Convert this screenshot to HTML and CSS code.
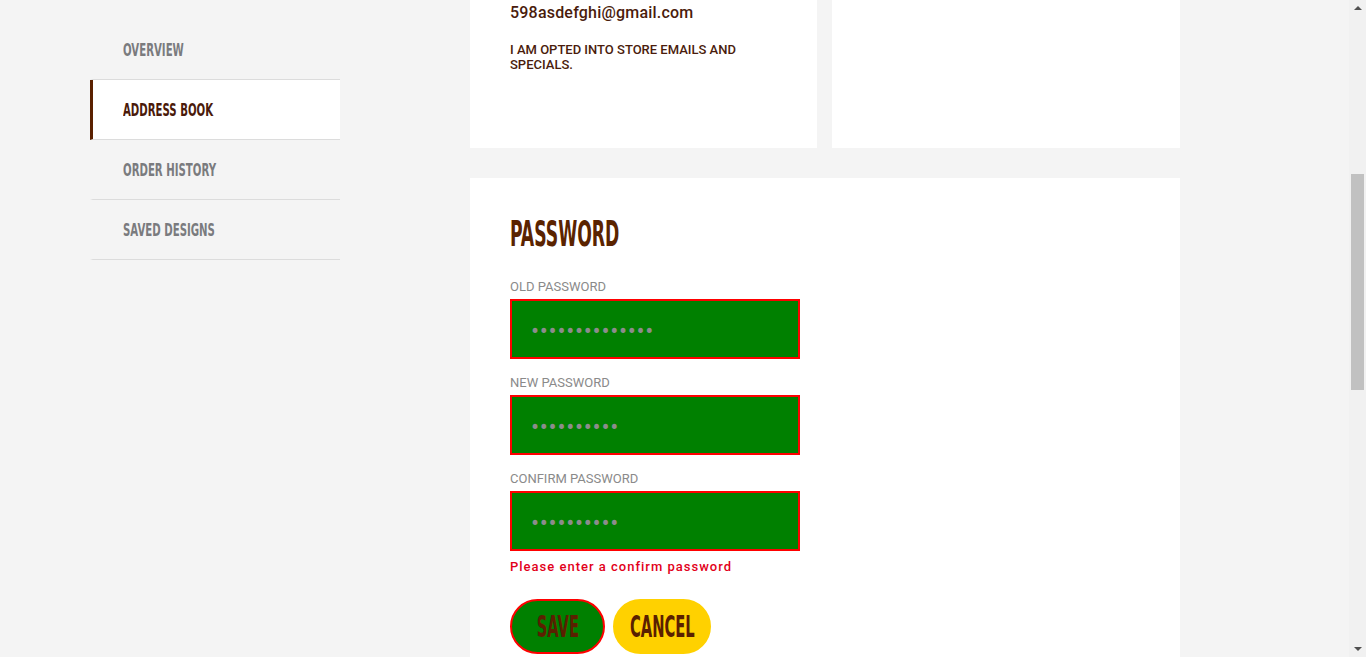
FILE: index.html
```html
<!DOCTYPE html>
<html lang="en">
<head>
<meta charset="utf-8">
<title>My Account - Password</title>
<link rel="stylesheet" href="styles.css">
</head>
<body>
<div class="account">
  <aside class="sidebar">
    <nav class="side-nav">
      <a class="side-link" href="#"><span class="cond">OVERVIEW</span></a>
      <a class="side-link is-active" href="#"><span class="cond">ADDRESS BOOK</span></a>
      <a class="side-link" href="#"><span class="cond">ORDER HISTORY</span></a>
      <a class="side-link" href="#"><span class="cond">SAVED DESIGNS</span></a>
    </nav>
  </aside>
  <main class="main">
    <div class="card-row">
      <section class="card info-card">
        <p class="email">598asdefghi@gmail.com</p>
        <p class="optin">I AM OPTED INTO STORE EMAILS AND SPECIALS.</p>
      </section>
      <section class="card address-card"></section>
    </div>
    <section class="card password-card">
      <h2 class="section-title"><span class="cond">PASSWORD</span></h2>
      <form class="pw-form">
        <label class="field-label" for="old-pw">OLD PASSWORD</label>
        <input class="field-input" type="password" id="old-pw" value="aaaaaaaaaaaaaa">
        <label class="field-label" for="new-pw">NEW PASSWORD</label>
        <input class="field-input" type="password" id="new-pw" value="aaaaaaaaaa">
        <label class="field-label" for="confirm-pw">CONFIRM PASSWORD</label>
        <input class="field-input" type="password" id="confirm-pw" value="aaaaaaaaaa">
        <p class="error">Please enter a confirm password</p>
        <div class="actions">
          <button type="button" class="btn btn-save"><span class="cond">SAVE</span></button>
          <button type="button" class="btn btn-cancel"><span class="cond">CANCEL</span></button>
        </div>
      </form>
    </section>
  </main>
</div>
<div class="fake-scrollbar" aria-hidden="true">
  <span class="sb-arrow sb-up"></span>
  <span class="sb-thumb"></span>
  <span class="sb-arrow sb-down"></span>
</div>
<script src="script.js"></script>
</body>
</html>
```
FILE: styles.css
```css
html {
  overflow-y: scroll;
}
body {
  margin: 0;
  background: #f4f4f4;
  font-family: Roboto, "Liberation Sans", sans-serif;
  color: #4a1c0c;
}
.account {
  display: flex;
  gap: 130px;
  padding: 396px 0 724px 90px;
}
.sidebar {
  width: 250px;
  flex: none;
  padding-top: 101px;
}
.side-nav {
  display: flex;
  flex-direction: column;
}
.cond {
  display: inline-block;
  font-family: "Liberation Sans Narrow", "DejaVu Sans Condensed", "Liberation Sans", sans-serif;
  font-weight: 700;
  white-space: nowrap;
  transform-origin: left center;
}
.side-link {
  height: 59px;
  display: flex;
  align-items: center;
  padding-left: 30px;
  border-bottom: 1px solid #dcdcdc;
  border-left: 3px solid transparent;
  text-decoration: none;
  color: #7a7b7e;
  font-size: 17px;
}
.side-link .cond {
  transform: scaleX(0.665);
}
.side-link.is-active {
  background: #fff;
  border-left-color: #5a2000;
  color: #4a1a0a;
}
.main {
  width: 710px;
  flex: none;
  display: flex;
  flex-direction: column;
  gap: 30px;
}
.card-row {
  display: flex;
  gap: 15px;
}
.card {
  background: #fff;
  box-sizing: border-box;
}
.info-card {
  width: 347px;
  padding: 82px 40px 76px;
}
.address-card {
  width: 348px;
}
.email {
  margin: 0;
  font-size: 16px;
  line-height: 24px;
  letter-spacing: 0.2px;
  font-weight: 500;
}
.optin {
  margin: 17px 0 0;
  font-size: 13px;
  line-height: 15px;
  font-weight: 500;
}
.password-card {
  padding: 38px 40px 40px;
}
.section-title {
  margin: 0 0 27px;
  font-size: 36px;
  line-height: 36px;
  color: #5a2300;
}
.section-title .cond {
  transform: scaleX(0.532);
}
.pw-form {
  display: flex;
  flex-direction: column;
  align-items: flex-start;
}
.field-label {
  font-size: 13px;
  line-height: 16px;
  color: #8a8a8a;
  margin-bottom: 4px;
}
.field-input {
  box-sizing: border-box;
  width: 290px;
  height: 60px;
  margin: 0 0 16px;
  padding: 4px 19px 0;
  background: #008000;
  border: 2px solid #ff0000;
  color: #8c8c8c;
  font-family: Roboto, sans-serif;
  font-size: 24px;
  letter-spacing: 0.7px;
  outline: none;
}
.field-input:last-of-type {
  margin-bottom: 0;
}
.error {
  margin: 8px 0 0;
  font-size: 13px;
  line-height: 16px;
  font-weight: 500;
  letter-spacing: 1px;
  color: #e2001a;
}
.actions {
  display: flex;
  gap: 8px;
  margin-top: 24px;
}
.btn {
  box-sizing: border-box;
  height: 55px;
  padding: 0;
  border-radius: 28px;
  border: 2px solid transparent;
  color: #5a2000;
  font-size: 30px;
  display: flex;
  align-items: center;
  justify-content: center;
  cursor: pointer;
}
.btn .cond {
  transform: scaleX(0.545);
  transform-origin: center center;
}
.btn-save {
  background: #008000;
  border-color: #ff0000;
  width: 95px;
}
.btn-cancel {
  background: #ffd100;
  border-color: #ffd100;
  width: 98px;
}
.fake-scrollbar {
  position: fixed;
  top: 0;
  right: 0;
  width: 17px;
  height: 100vh;
  background: #f1f1f1;
}
.sb-arrow {
  position: absolute;
  left: 5px;
  width: 0;
  height: 0;
  border-left: 4px solid transparent;
  border-right: 4px solid transparent;
}
.sb-up {
  top: 6px;
  border-bottom: 4px solid #505050;
}
.sb-down {
  bottom: 6px;
  border-top: 4px solid #505050;
}
.sb-thumb {
  position: absolute;
  left: 2px;
  top: 174px;
  width: 13px;
  height: 216px;
  background: #c1c1c1;
}
```
FILE: script.js
```js
window.scrollTo(0, 477);
window.addEventListener('load', function () {
  window.scrollTo(0, 477);
});
```
